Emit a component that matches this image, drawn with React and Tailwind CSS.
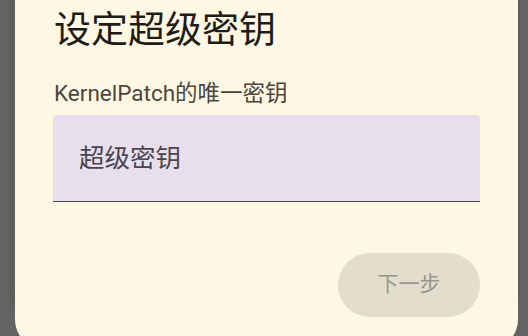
import React from "react";

const font = { fontFamily: "Roboto, 'Noto Sans CJK SC', sans-serif" };

function SuperKeyDialog() {
  return (
    <div className="relative ml-[15px] -mt-[28px] w-[503px] h-[376px] rounded-[28px] bg-[#fef7e4] px-[38px] pt-[37px]">
      <h2 className="text-[37px] leading-[44px] text-[#1e1c16] ml-px">设定超级密钥</h2>
      <p className="mt-[26px] text-[22.5px] leading-[28px] text-[#4b4740] ml-px">KernelPatch的唯一密钥</p>

      {/* super key field */}
      <div className="mt-[8px] h-[87px] rounded-t-[4px] bg-[#e7dfeb] border-b border-[#4c4757] px-[26px] flex items-center">
        <span className="text-[25.5px] text-[#4a4552]">超级密钥</span>
      </div>

      <div className="mt-[51px] flex justify-end">
        <button
          disabled
          className="w-[142px] h-[64px] rounded-full bg-[#e2ddcc] text-[21px] text-[#9a968a]"
        >
          下一步
        </button>
      </div>
    </div>
  );
}

export default function App() {
  return (
    <div className="relative h-[336px] w-[528px] overflow-hidden bg-[#646264]" style={font}>
      {/* page behind the scrim */}
      <div className="absolute left-[8px] right-[8px] top-0 h-[318px] rounded-b-[28px] bg-[#5f5e5a]" />
      <div className="relative">
        <SuperKeyDialog />
      </div>
    </div>
  );
}
